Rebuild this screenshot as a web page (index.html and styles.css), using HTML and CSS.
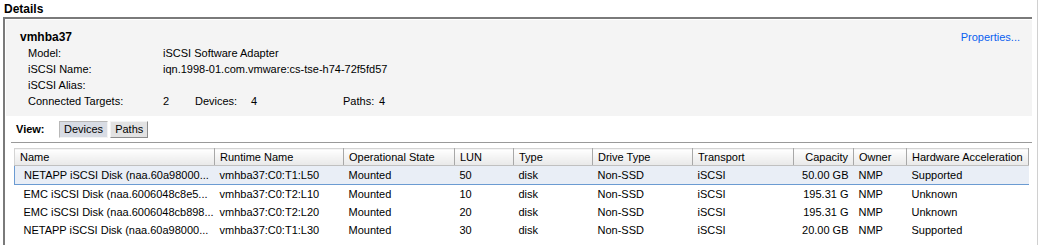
FILE: index.html
```html
<!DOCTYPE html>
<html lang="en">
<head>
  <meta charset="UTF-8">
  <title>Details</title>
  <link rel="stylesheet" href="styles.css">
</head>
<body>
  <div class="page">
    <div class="title">Details</div>

    <div class="frame">
      <div class="summary">
        <div class="summary-head">
          <span class="adapter">vmhba37</span>
          <a class="link" href="#">Properties...</a>
        </div>
        <div class="prop"><span class="label">Model:</span><span>iSCSI Software Adapter</span></div>
        <div class="prop"><span class="label">iSCSI Name:</span><span>iqn.1998-01.com.vmware:cs-tse-h74-72f5fd57</span></div>
        <div class="prop"><span class="label">iSCSI Alias:</span><span></span></div>
        <div class="prop">
          <span class="label">Connected Targets:</span>
          <span class="num">2</span>
          <span class="sub-label">Devices:</span>
          <span class="num2">4</span>
          <span class="sub-label2">Paths:</span>
          <span>4</span>
        </div>
      </div>

      <div class="view-bar">
        <span class="view-label">View:</span>
        <button class="tab active">Devices</button>
        <button class="tab">Paths</button>
      </div>

      <table class="devices">
        <colgroup>
          <col style="width: 200px">
          <col style="width: 129px">
          <col style="width: 111px">
          <col style="width: 59px">
          <col style="width: 79px">
          <col style="width: 100px">
          <col style="width: 101px">
          <col style="width: 60px">
          <col style="width: 53px">
          <col style="width: 122px">
        </colgroup>
        <thead>
          <tr>
            <th>Name</th>
            <th>Runtime Name</th>
            <th>Operational State</th>
            <th>LUN</th>
            <th>Type</th>
            <th>Drive Type</th>
            <th>Transport</th>
            <th class="right">Capacity</th>
            <th>Owner</th>
            <th>Hardware Acceleration</th>
          </tr>
        </thead>
        <tbody>
          <tr class="selected">
            <td class="first">NETAPP iSCSI Disk (naa.60a98000...</td>
            <td>vmhba37:C0:T1:L50</td>
            <td>Mounted</td>
            <td>50</td>
            <td>disk</td>
            <td>Non-SSD</td>
            <td>iSCSI</td>
            <td class="right">50.00 GB</td>
            <td>NMP</td>
            <td>Supported</td>
          </tr>
          <tr>
            <td class="first">EMC iSCSI Disk (naa.6006048c8e5...</td>
            <td>vmhba37:C0:T2:L10</td>
            <td>Mounted</td>
            <td>10</td>
            <td>disk</td>
            <td>Non-SSD</td>
            <td>iSCSI</td>
            <td class="right">195.31 G</td>
            <td>NMP</td>
            <td>Unknown</td>
          </tr>
          <tr>
            <td class="first">EMC iSCSI Disk (naa.6006048cb898...</td>
            <td>vmhba37:C0:T2:L20</td>
            <td>Mounted</td>
            <td>20</td>
            <td>disk</td>
            <td>Non-SSD</td>
            <td>iSCSI</td>
            <td class="right">195.31 G</td>
            <td>NMP</td>
            <td>Unknown</td>
          </tr>
          <tr>
            <td class="first">NETAPP iSCSI Disk (naa.60a98000...</td>
            <td>vmhba37:C0:T1:L30</td>
            <td>Mounted</td>
            <td>30</td>
            <td>disk</td>
            <td>Non-SSD</td>
            <td>iSCSI</td>
            <td class="right">20.00 GB</td>
            <td>NMP</td>
            <td>Supported</td>
          </tr>
        </tbody>
      </table>
    </div>
  </div>
</body>
</html>
```

FILE: styles.css
```css
body {
  margin: 0;
  background-color: white;
  font-family: "Liberation Sans", Arial, sans-serif;
  font-size: 11px;
  color: #000;
}

.page {
  width: 1037px;
  height: 245px;
  border-right: 1px solid #d0d0d0;
  overflow: hidden;
}

.title {
  font-weight: bold;
  font-size: 12px;
  padding: 2px 0 0 4px;
  height: 15px;
}

.frame {
  margin-left: 3px;
  width: 1026px;
  height: 230px;
  border-top: 2px solid #7a7a7a;
  border-left: 2px solid #7a7a7a;
  padding: 0 0 0 1px;
}

.summary {
  background-color: #f4f4f4;
  padding: 10px 12px 7px 14px;
  margin-top: 1px;
}

.summary-head {
  display: flex;
  justify-content: space-between;
  line-height: 15px;
}

.adapter {
  font-weight: bold;
  font-size: 12px;
}

.link {
  color: #0a5ff0;
  text-decoration: none;
}

.prop {
  display: flex;
  line-height: 16px;
  padding-left: 8px;
  white-space: nowrap;
}

.prop span {
  flex: none;
}

.label {
  width: 135px;
}

.num {
  width: 32px;
}

.sub-label {
  width: 56px;
}

.num2 {
  width: 92px;
}

.sub-label2 {
  width: 36px;
}

.view-bar {
  display: flex;
  align-items: center;
  height: 26px;
  margin-left: 5px;
  border-bottom: 1px solid #9a9a9a;
}

.view-label {
  font-weight: bold;
  width: 43px;
  padding-left: 5px;
}

.tab {
  font-family: inherit;
  font-size: 11px;
  height: 17px;
  padding: 0 4px;
  margin-right: 2px;
  background-color: #e2e2e2;
  border: 1px solid #8c8c8c;
  border-top-color: #f4f4f4;
  border-left-color: #f4f4f4;
}

.tab.active {
  background-color: #d8dce4;
  border: 1px solid #b8b8b8;
  border-bottom-color: #f4f4f4;
  border-right-color: #f4f4f4;
}

.devices {
  margin: 5px 0 0 8px;
  width: 1014px;
  table-layout: fixed;
  border-collapse: collapse;
}

.devices th {
  font-weight: normal;
  text-align: left;
  height: 16px;
  padding: 0 5px;
  background: linear-gradient(#ffffff, #e8e8e8);
  border-top: 1px solid #d4d4d4;
  border-bottom: 1px solid #c0c0c0;
  border-right: 1px solid #a8a8a8;
  white-space: nowrap;
  overflow: hidden;
}

.devices th:first-child {
  border-left: 1px solid #d4d4d4;
}

.devices td {
  height: 18px;
  padding: 0 5px;
  white-space: nowrap;
  overflow: hidden;
}

.devices td.first {
  padding-left: 9px;
}

.devices .right {
  text-align: right;
}

.devices tr.selected td {
  background-color: #e9eef6;
  border-top: 1px solid #6b9bd2;
  border-bottom: 1px solid #6b9bd2;
}

.devices tr.selected td:first-child {
  border-left: 1px solid #6b9bd2;
}
```
